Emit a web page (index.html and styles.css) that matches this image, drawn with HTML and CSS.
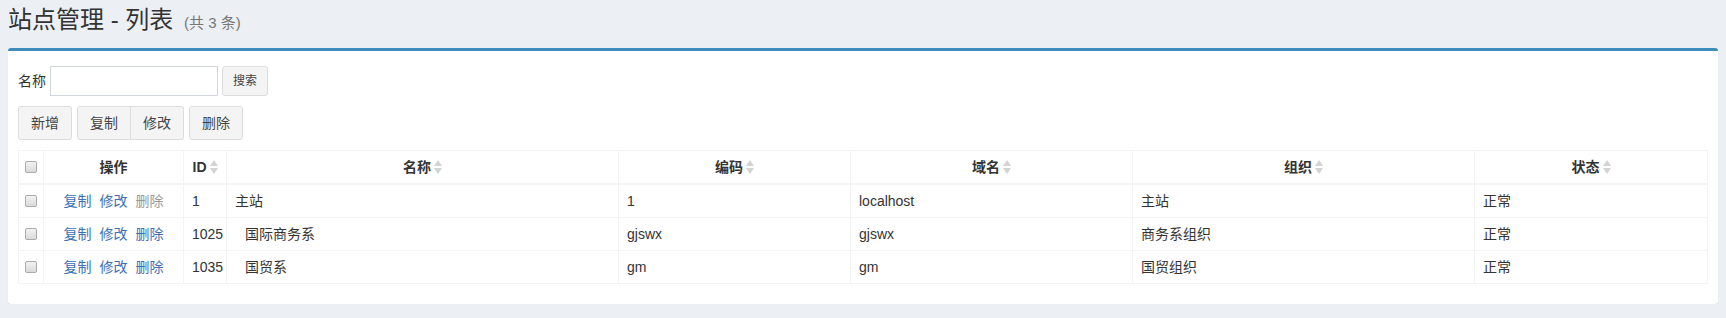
FILE: index.html
```html
<!DOCTYPE html>
<html lang="zh-CN">
<head>
  <meta charset="UTF-8" />
  <title>站点管理 - 列表</title>
  <link rel="stylesheet" href="styles.css">
</head>
<body>
  <section class="content-header">
    <h1>站点管理 - 列表 <small>(共 3 条)</small></h1>
  </section>

  <div class="box">
    <div class="box-body">
      <form class="search-form">
        <label for="name">名称</label>
        <input type="text" id="name" class="input-sm" />
        <button type="button" class="btn btn-sm">搜索</button>
      </form>

      <div class="toolbar">
        <button type="button" class="btn">新增</button>
        <div class="btn-group">
          <button type="button" class="btn">复制</button><button type="button" class="btn">修改</button>
        </div>
        <button type="button" class="btn">删除</button>
      </div>

      <table class="table">
        <colgroup>
          <col style="width:25px">
          <col style="width:140px">
          <col style="width:43px">
          <col style="width:392px">
          <col style="width:232px">
          <col style="width:282px">
          <col style="width:342px">
          <col>
        </colgroup>
        <thead>
          <tr>
            <th class="check"><input type="checkbox" /></th>
            <th>操作</th>
            <th class="sort">ID</th>
            <th class="sort">名称</th>
            <th class="sort">编码</th>
            <th class="sort">域名</th>
            <th class="sort">组织</th>
            <th class="sort">状态</th>
          </tr>
        </thead>
        <tbody>
          <tr>
            <td class="check"><input type="checkbox" /></td>
            <td class="ops"><a href="#">复制</a><a href="#">修改</a><span class="disabled">删除</span></td>
            <td>1</td>
            <td>主站</td>
            <td>1</td>
            <td>localhost</td>
            <td>主站</td>
            <td>正常</td>
          </tr>
          <tr>
            <td class="check"><input type="checkbox" /></td>
            <td class="ops"><a href="#">复制</a><a href="#">修改</a><a href="#">删除</a></td>
            <td>1025</td>
            <td class="child">国际商务系</td>
            <td>gjswx</td>
            <td>gjswx</td>
            <td>商务系组织</td>
            <td>正常</td>
          </tr>
          <tr>
            <td class="check"><input type="checkbox" /></td>
            <td class="ops"><a href="#">复制</a><a href="#">修改</a><a href="#">删除</a></td>
            <td>1035</td>
            <td class="child">国贸系</td>
            <td>gm</td>
            <td>gm</td>
            <td>国贸组织</td>
            <td>正常</td>
          </tr>
        </tbody>
      </table>
    </div>
  </div>
</body>
</html>
```

FILE: styles.css
```css
body {
  margin: 0;
  background-color: #ecf0f5;
  color: #333;
  font-family: "Liberation Sans", "Noto Sans CJK SC", sans-serif;
  font-size: 14px;
  line-height: 20px;
}
.content-header {
  padding: 6px 8px 0;
}
.content-header h1 {
  margin: 0;
  font-size: 24px;
  font-weight: normal;
  line-height: 28px;
}
.content-header h1 small {
  font-size: 15px;
  color: #777;
  padding-left: 4px;
}
.box {
  margin: 11px 8px 0;
  background: #fff;
  border-top: 3px solid #3c8dbc;
  border-radius: 3px;
  box-shadow: 0 1px 1px rgba(0, 0, 0, 0.1);
}
.box-body {
  padding: 15px 10px 20px;
}
.search-form {
  display: flex;
  align-items: center;
  gap: 4px;
  margin: 0;
}
.search-form label {
  font-size: 14px;
}
.input-sm {
  width: 168px;
  height: 30px;
  box-sizing: border-box;
  border: 1px solid #d2d6de;
  padding: 5px 10px;
  margin: 0;
  font-size: 12px;
}
.btn {
  font-family: inherit;
  background-color: #f4f4f4;
  color: #444;
  border: 1px solid #ddd;
  border-radius: 3px;
  padding: 6px 12px;
  font-size: 14px;
  line-height: 20px;
  margin: 0;
  cursor: pointer;
}
.btn-sm {
  padding: 5px 10px;
  font-size: 12px;
  line-height: 18px;
}
.toolbar {
  display: flex;
  gap: 5px;
  margin-top: 10px;
}
.btn-group {
  display: flex;
}
.btn-group .btn:first-child {
  border-top-right-radius: 0;
  border-bottom-right-radius: 0;
}
.btn-group .btn:last-child {
  border-top-left-radius: 0;
  border-bottom-left-radius: 0;
  border-left: none;
}
.table {
  width: 100%;
  margin-top: 10px;
  border-collapse: collapse;
  table-layout: fixed;
  border: 1px solid #f4f4f4;
}
.table th, .table td {
  border: 1px solid #f4f4f4;
  padding: 6px 8px;
  text-align: left;
  vertical-align: middle;
  white-space: nowrap;
}
.table th {
  text-align: center;
  font-weight: bold;
  border-bottom-width: 2px;
}
.table .check {
  padding: 6px 4px;
  text-align: center;
}
.table th.sort::after {
  content: "";
  display: inline-block;
  width: 8px;
  height: 14px;
  margin-left: 3px;
  vertical-align: -2px;
  background: url("data:image/svg+xml,%3Csvg xmlns='http://www.w3.org/2000/svg' width='8' height='14'%3E%3Cpath d='M4 0 L8 6 L0 6 Z M0 8 L8 8 L4 14 Z' fill='%23d3d3d3'/%3E%3C/svg%3E") no-repeat;
}
input[type="checkbox"] {
  appearance: none;
  -webkit-appearance: none;
  width: 12px;
  height: 12px;
  margin: 0;
  border: 1px solid #aaa;
  border-radius: 2px;
  background: linear-gradient(#f2f2f2, #dadada);
  vertical-align: -1px;
}
.ops {
  text-align: center !important;
}
.ops a, .ops span {
  margin: 0 4px;
}
.ops a {
  color: #3c6fb4;
  text-decoration: none;
}
.ops .disabled {
  color: #999;
}
.child {
  padding-left: 18px !important;
}
```
